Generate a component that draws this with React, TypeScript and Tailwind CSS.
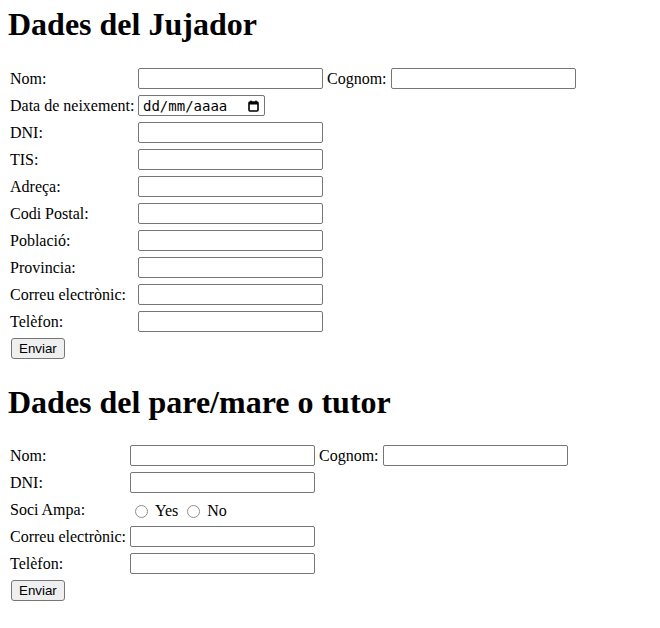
export default function App() {
  const jugador = ["DNI:", "TIS:", "Adreça:", "Codi Postal:", "Població:", "Provincia:", "Correu electrònic:", "Telèfon:"];

  const TextInput = () => (
    <input
      type="text"
      className="w-[185px] h-[21px] border border-[#767676] rounded-[2px] bg-white px-[2px] text-[13px] font-['Liberation_Sans',sans-serif]"
    />
  );

  const Button = () => (
    <button className="ml-[1px] h-[21px] px-[7px] border border-[#767676] rounded-[3px] bg-[#efefef] text-[13.33px] leading-none text-black font-['Liberation_Sans',sans-serif]">
      Enviar
    </button>
  );

  const Radio = () => <span className="inline-block w-[13px] h-[13px] rounded-full border border-[#8f8f8f] bg-white mt-[3px]" />;

  return (
    <div className="min-h-screen bg-white text-black text-[16px] font-['Liberation_Serif',serif] pt-[6px] px-[8px]">
      <h1 className="text-[32px] font-bold leading-[36px]">Dades del Jujador</h1>

      {/* Jugador */}
      <div className="mt-[24px] flex flex-col gap-[2px] pl-[2px]">
        <div className="flex items-center h-[25px]">
          <span className="w-[128px]">Nom:</span>
          <TextInput />
          <span className="mx-[4px]">Cognom:</span>
          <TextInput />
        </div>
        <div className="flex items-center h-[25px]">
          <span className="w-[128px]">Data de neixement:</span>
          <div className="w-[127px] h-[21px] border border-[#767676] rounded-[2px] bg-white flex items-center justify-between pl-[4px] pr-[5px]">
            <span className="font-['DejaVu_Sans_Mono',monospace] text-[14px] leading-none">dd/mm/aaaa</span>
            <svg width="11" height="12" viewBox="0 0 11 12" fill="none">
              <rect x="1" y="2" width="9" height="9" rx="1" stroke="#000" strokeWidth="1.6" />
              <rect x="1" y="2" width="9" height="2.5" fill="#000" />
              <line x1="3" y1="0.5" x2="3" y2="2.5" stroke="#000" strokeWidth="1.2" />
              <line x1="8" y1="0.5" x2="8" y2="2.5" stroke="#000" strokeWidth="1.2" />
            </svg>
          </div>
        </div>
        {jugador.map((label) => (
          <div key={label} className="flex items-center h-[25px]">
            <span className="w-[128px]">{label}</span>
            <TextInput />
          </div>
        ))}
        <div className="flex items-center h-[25px]">
          <Button />
        </div>
      </div>

      <h1 className="mt-[23px] text-[32px] font-bold leading-[36px]">Dades del pare/mare o tutor</h1>

      {/* Pare/mare o tutor */}
      <div className="mt-[23px] flex flex-col gap-[2px] pl-[2px]">
        <div className="flex items-center h-[25px]">
          <span className="w-[120px]">Nom:</span>
          <TextInput />
          <span className="mx-[4px]">Cognom:</span>
          <TextInput />
        </div>
        <div className="flex items-center h-[25px]">
          <span className="w-[120px]">DNI:</span>
          <TextInput />
        </div>
        <div className="flex items-center h-[25px]">
          <span className="w-[120px]">Soci Ampa:</span>
          <span className="ml-[5px] flex items-center">
            <Radio />
          </span>
          <span className="ml-[7px] mt-[2px]">Yes</span>
          <span className="ml-[9px] flex items-center">
            <Radio />
          </span>
          <span className="ml-[7px] mt-[2px]">No</span>
        </div>
        <div className="flex items-center h-[25px]">
          <span className="w-[120px]">Correu electrònic:</span>
          <TextInput />
        </div>
        <div className="flex items-center h-[25px]">
          <span className="w-[120px]">Telèfon:</span>
          <TextInput />
        </div>
        <div className="flex items-center h-[25px]">
          <Button />
        </div>
      </div>
    </div>
  );
}
